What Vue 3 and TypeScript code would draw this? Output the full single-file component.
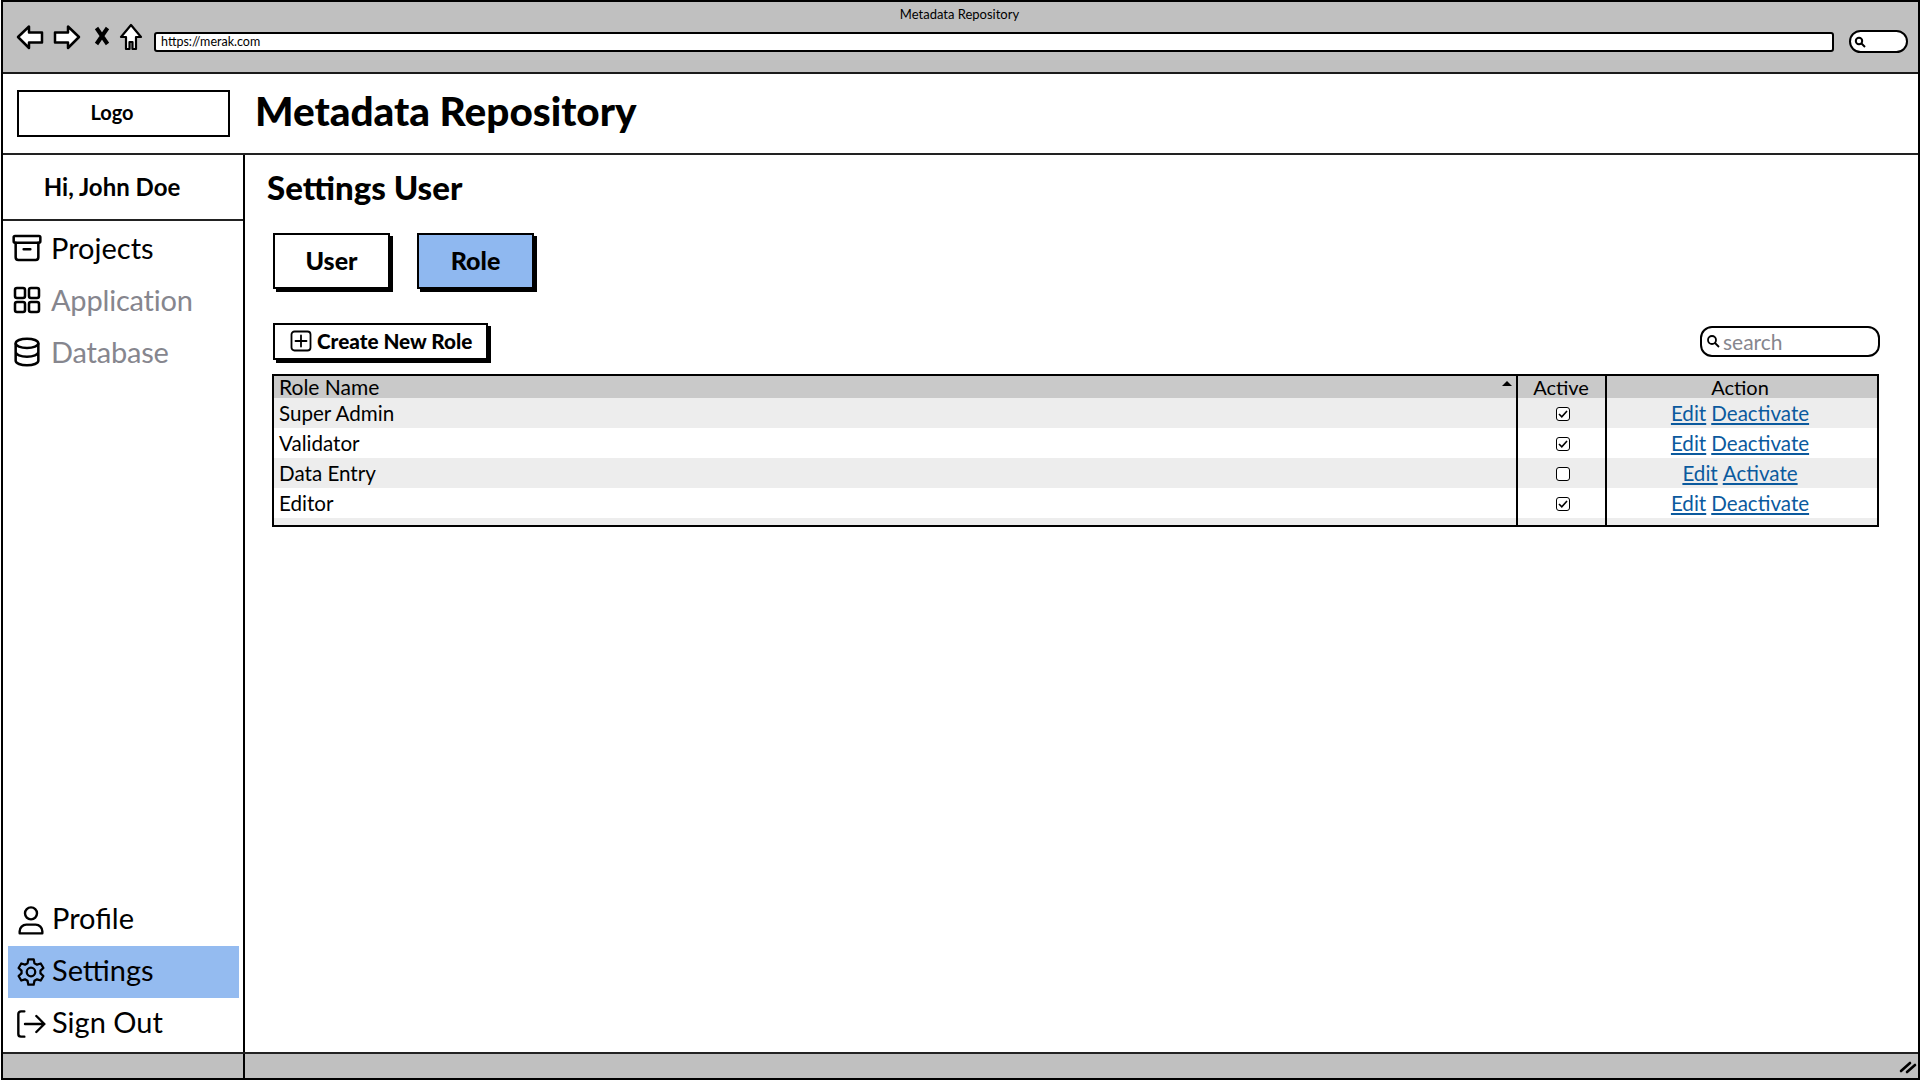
<script setup lang="ts">
interface Role { name: string; active: boolean }
const roles: Role[] = [
  { name: 'Super Admin', active: true },
  { name: 'Validator', active: true },
  { name: 'Data Entry', active: false },
  { name: 'Editor', active: true },
]
</script>

<template>
  <div class="frame">
    <div class="chrome">
      <div class="chrome-title">Metadata Repository</div>
      <div class="chrome-row">
        <div class="nav-icons">
          <svg width="28" height="26" viewBox="0 0 28 26" class="ci"><path d="M2 13 13 2.500v6h13v10H13v5.500z" fill="#fff" stroke="#000" stroke-width="2.500" stroke-linejoin="round"/></svg>
          <svg width="28" height="26" viewBox="0 0 28 26" class="ci"><path d="M26 13 15 2.500v6H2v10h13v5.500z" fill="#fff" stroke="#000" stroke-width="2.500" stroke-linejoin="round"/></svg>
          <svg width="16" height="20" viewBox="0 0 16 20" class="ci x"><path d="M2.500 2 13.500 18M13.500 2 2.500 18" fill="none" stroke="#000" stroke-width="4"/></svg>
          <svg width="24" height="28" viewBox="0 0 24 28" class="ci"><path d="M12 2 22 14h-5v12h-3.500v-7h-3v7H7V14H2z" fill="#fff" stroke="#000" stroke-width="2.200" stroke-linejoin="round"/></svg>
        </div>
        <div class="address">https://merak.com</div>
        <div class="pill">
          <svg width="12" height="12" viewBox="0 0 12 12"><circle cx="5" cy="5" r="3.200" fill="none" stroke="#000" stroke-width="2"/><path d="M7.500 7.500 11 11" stroke="#000" stroke-width="2"/></svg>
        </div>
      </div>
    </div>

    <header class="header">
      <div class="logo">Logo</div>
      <h1 class="app-title">Metadata Repository</h1>
    </header>

    <div class="body">
      <aside class="sidebar">
        <div class="hi">Hi, John Doe</div>
        <nav class="nav">
          <div class="nav-item">
            <svg class="ico" width="32" height="32" viewBox="0 0 24 24" fill="none" stroke="#000" stroke-width="1.900" stroke-linecap="round" stroke-linejoin="round"><rect x="2" y="3" width="20" height="5" rx="1"/><path d="M3.500 8v11a2 2 0 0 0 2 2h13a2 2 0 0 0 2-2V8M9.500 13h5"/></svg>
            <span>Projects</span>
          </div>
          <div class="nav-item muted">
            <svg class="ico" width="32" height="32" viewBox="0 0 24 24" fill="none" stroke="#000" stroke-width="1.900" stroke-linejoin="round"><rect x="3" y="3" width="7.500" height="7.500" rx="1.500"/><rect x="13.500" y="3" width="7.500" height="7.500" rx="1.500"/><rect x="3" y="13.500" width="7.500" height="7.500" rx="1.500"/><rect x="13.500" y="13.500" width="7.500" height="7.500" rx="1.500"/></svg>
            <span>Application</span>
          </div>
          <div class="nav-item muted">
            <svg class="ico" width="32" height="32" viewBox="0 0 24 24" fill="none" stroke="#000" stroke-width="1.900"><ellipse cx="12" cy="5.500" rx="8.500" ry="3.500"/><path d="M3.500 5.500v13c0 2 3.800 3.500 8.500 3.500s8.500-1.500 8.500-3.500v-13M3.500 12c0 2 3.800 3.500 8.500 3.500s8.500-1.500 8.500-3.500"/></svg>
            <span>Database</span>
          </div>
        </nav>
        <nav class="nav bottom">
          <div class="nav-item">
            <svg class="ico" width="32" height="32" viewBox="0 0 24 24" fill="none" stroke="#000" stroke-width="1.800" stroke-linejoin="round"><circle cx="12" cy="7" r="4.500"/><path d="M3.500 22v-1.500a5 5 0 0 1 5-5h7a5 5 0 0 1 5 5V22z"/></svg>
            <span>Profile</span>
          </div>
          <div class="nav-item active">
            <svg class="ico" width="32" height="32" viewBox="0 0 24 24" fill="none" stroke="#000" stroke-width="1.700" stroke-linejoin="round"><circle cx="12" cy="12" r="3.200"/><path d="M10 2.500h4l.6 2.900 1.900 1.100 2.800-.9 2 3.400-2.200 2v2l2.200 2-2 3.400-2.800-.9-1.900 1.100-.6 2.900h-4l-.6-2.900-1.900-1.100-2.800.9-2-3.400 2.200-2v-2l-2.200-2 2-3.400 2.800.9 1.900-1.100z"/></svg>
            <span>Settings</span>
          </div>
          <div class="nav-item">
            <svg class="ico" width="32" height="32" viewBox="0 0 24 24" fill="none" stroke="#000" stroke-width="1.800" stroke-linecap="round" stroke-linejoin="round"><path d="M7 2.500H4.500a2 2 0 0 0-2 2v15a2 2 0 0 0 2 2H7M7.500 12H22M16 6l6 6-6 6"/></svg>
            <span>Sign Out</span>
          </div>
        </nav>
      </aside>

      <main class="main">
        <h2 class="page-title">Settings User</h2>
        <div class="tabs">
          <button class="tab">User</button>
          <button class="tab on">Role</button>
        </div>
        <div class="toolbar">
          <button class="create">
            <svg width="22" height="22" viewBox="0 0 22 22" fill="none" stroke="#000" stroke-width="1.800" stroke-linecap="round"><rect x="1.500" y="1.500" width="19" height="19" rx="3"/><path d="M11 5.500v11M5.500 11h11"/></svg>
            <span>Create New Role</span>
          </button>
          <div class="search">
            <svg width="14" height="14" viewBox="0 0 14 14" fill="none" stroke="#000" stroke-width="1.800"><circle cx="6" cy="6" r="4"/><path d="M9 9l4 4"/></svg>
            <span>search</span>
          </div>
        </div>
        <div class="table">
          <div class="tr head">
            <div class="c name">Role Name<i class="sort"></i></div>
            <div class="c active-col">Active</div>
            <div class="c action">Action</div>
          </div>
          <div v-for="(r, i) in roles" :key="r.name" class="tr" :class="{ alt: i % 2 === 0 }">
            <div class="c name">{{ r.name }}</div>
            <div class="c active-col">
              <span class="check">
                <svg v-if="r.active" width="10" height="8" viewBox="0 0 10 8" fill="none" stroke="#000" stroke-width="1.600"><path d="M1 4l2.800 2.800L9 1"/></svg>
              </span>
            </div>
            <div class="c action">
              <a class="link">Edit</a>
              <a class="link">{{ r.active ? 'Deactivate' : 'Activate' }}</a>
            </div>
          </div>
          <div class="tr tail alt">
            <div class="c name"></div>
            <div class="c active-col"></div>
            <div class="c action"></div>
          </div>
        </div>
      </main>
    </div>

    <footer class="status">
      <div class="status-left"></div>
      <svg class="grip" width="18" height="14" viewBox="0 0 18 14" fill="none" stroke="#000" stroke-width="2.600" stroke-linecap="round"><path d="M2 11 11 3M8 12 16 5"/></svg>
    </footer>
  </div>
</template>

<style>
html, body { margin: 0; background: #fff; overflow: hidden; }
</style>

<style scoped>
* { box-sizing: border-box; }
.frame {
  width: 1919px;
  height: 1080px;
  margin-left: 1px;
  border: 2px solid #000;
  display: flex;
  flex-direction: column;
  font-family: Lato, "Noto Sans", sans-serif;
  color: #000;
  background: #fff;
}
.chrome {
  height: 72px;
  flex: none;
  background: #c0c0c0;
  border-bottom: 2px solid #1a1a1a;
  padding: 0 10px 0 13px;
  display: flex;
  flex-direction: column;
}
.chrome-title {
  text-align: center;
  font-size: 13px;
  line-height: 13px;
  margin-top: 6px;
  padding-right: 5px;
}
.chrome-row {
  display: flex;
  align-items: flex-start;
  margin-top: 2px;
}
.nav-icons { display: flex; align-items: center; width: 138px; height: 28px; flex: none; gap: 9px; }
.ci { display: block; }
.ci.x { margin: 0 0 2px 4px; }
.address {
  flex: 1;
  height: 20px;
  margin-top: 9px;
  background: #fff;
  border: 2px solid #000;
  border-radius: 3px;
  font-size: 12.500px;
  line-height: 16px;
  padding-left: 5px;
}
.pill {
  width: 59px;
  height: 23px;
  margin-top: 7px;
  margin-left: 15px;
  flex: none;
  border: 2px solid #000;
  border-radius: 12px;
  display: flex;
  align-items: center;
  padding-left: 3px;
  background: #fff;
}
.header {
  height: 81px;
  flex: none;
  border-bottom: 2px solid #222;
  display: flex;
  align-items: center;
  padding: 0 0 0 14px;
}
.logo {
  width: 213px;
  height: 47px;
  border: 2px solid #000;
  display: flex;
  align-items: center;
  justify-content: center;
  font-weight: 700;
  font-size: 20px;
  padding: 0 23px 3px 0;
}
.app-title {
  margin: 0 0 6px 25px;
  font-size: 40.500px;
  font-weight: 900;
  line-height: 48px;
}
.body { flex: 1; display: flex; min-height: 0; }
.sidebar {
  width: 242px;
  flex: none;
  border-right: 2px solid #000;
  display: flex;
  flex-direction: column;
  padding-bottom: 2px;
}
.hi {
  height: 66px;
  flex: none;
  border-bottom: 2px solid #222;
  display: flex;
  align-items: center;
  justify-content: center;
  padding: 0 22px 2px 0;
  font-weight: 700;
  font-size: 24px;
}
.nav { display: flex; flex-direction: column; padding: 1px 4px 0 5px; }
.nav.bottom { margin-top: auto; padding-top: 0; }
.nav-item {
  height: 52px;
  display: flex;
  align-items: center;
  gap: 8px;
  padding-left: 3px;
  font-size: 29px;
}
.nav-item span { padding-bottom: 2px; }
.nav-item.muted span { letter-spacing: -0.2px; }
.nav.bottom .nav-item { padding-left: 7px; gap: 5px; }
.nav.bottom .nav-item span { padding-bottom: 5px; }
.nav-item.muted { color: #86868e; }
.nav-item.active { background: #94bbf0; }
.ico { flex: none; display: block; }
.main { flex: 1; min-width: 0; padding: 0 37px 0 28px; display: flex; flex-direction: column; }
.page-title {
  margin: 13px 0 0 -6px;
  font-size: 33px;
  font-weight: 900;
  line-height: 38px;
}
.tabs { display: flex; gap: 27px; margin-top: 27px; }
.tab, .create {
  border: 2px solid #000;
  box-shadow: 3px 3px 0 #000;
  background: #fff;
  font-family: inherit;
  color: #000;
  padding: 0;
}
.tab { width: 117px; height: 56px; font-size: 25px; font-weight: 900; padding-bottom: 2px; }
.tab.on { background: #8fb8f0; }
.toolbar {
  display: flex;
  justify-content: space-between;
  align-items: center;
  margin-top: 33px;
  height: 38px;
}
.create {
  width: 215px;
  height: 37px;
  display: flex;
  align-items: center;
  gap: 5px;
  padding-left: 15px;
  font-size: 20.700px;
  font-weight: 900;
}
.search {
  width: 180px;
  height: 31px;
  margin-right: 1px;
  border: 2px solid #000;
  border-radius: 12px;
  display: flex;
  align-items: center;
  gap: 3px;
  padding-left: 4px;
  font-size: 21px;
  color: #86868e;
}
.table {
  width: 1607px;
  margin-top: 14px;
  margin-left: -1px;
  border: 2px solid #000;
  display: flex;
  flex-direction: column;
  font-size: 20.600px;
}
.tr {
  display: grid;
  grid-template-columns: 1242px 89px 1fr;
  height: 30px;
}
.tr.alt { background: #ededed; }
.tr.head { height: 22px; background: #c9c9c9; font-size: 20px; }
.tr.head .c { padding-bottom: 5px; }
.tr.head .c.name { font-size: 21px; }
.tr.tail { height: 7px; }
.c { display: flex; align-items: center; min-width: 0; line-height: 22px; }
.c.name { padding-left: 5px; position: relative; }
.c.active-col { justify-content: center; border-left: 2px solid #000; }
.c.action { justify-content: center; gap: 5px; border-left: 2px solid #000; padding-right: 4px; }
.sort {
  position: absolute;
  right: 4px;
  top: 5px;
  width: 0;
  height: 0;
  border: 5px solid transparent;
  border-top: 0;
  border-bottom: 5px solid #000;
}
.head .c.active-col { padding-right: 1px; }
.check {
  width: 14px;
  height: 14px;
  border: 1.500px solid #000;
  border-radius: 3px;
  background: #fff;
  display: flex;
  align-items: center;
  justify-content: center;
  margin: 2px 0 0 3px;
}
.link { color: #0b5a9e; text-decoration: underline; text-underline-offset: 2px; }
.status {
  height: 26px;
  flex: none;
  background: #c0c0c0;
  border-top: 2px solid #222;
  display: flex;
  align-items: stretch;
  justify-content: space-between;
  position: relative;
}
.status-left { width: 242px; border-right: 2px solid #000; margin-bottom: -4px; }
.grip { align-self: center; margin-right: 1px; margin-top: 2px; }
</style>
